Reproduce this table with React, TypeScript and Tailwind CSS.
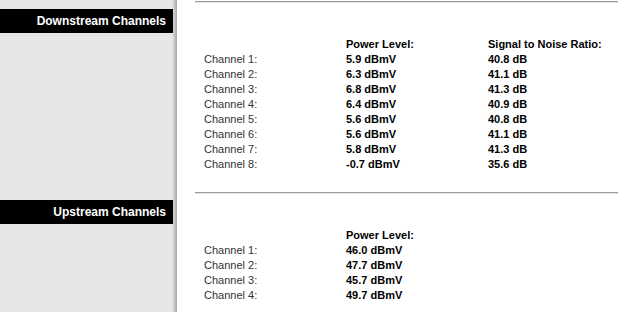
import React from "react";

type Row = { label: string; power: string; snr?: string };

const downstream: Row[] = [
  { label: "Channel 1:", power: "5.9 dBmV", snr: "40.8 dB" },
  { label: "Channel 2:", power: "6.3 dBmV", snr: "41.1 dB" },
  { label: "Channel 3:", power: "6.8 dBmV", snr: "41.3 dB" },
  { label: "Channel 4:", power: "6.4 dBmV", snr: "40.9 dB" },
  { label: "Channel 5:", power: "5.6 dBmV", snr: "40.8 dB" },
  { label: "Channel 6:", power: "5.6 dBmV", snr: "41.1 dB" },
  { label: "Channel 7:", power: "5.8 dBmV", snr: "41.3 dB" },
  { label: "Channel 8:", power: "-0.7 dBmV", snr: "35.6 dB" },
];

const upstream: Row[] = [
  { label: "Channel 1:", power: "46.0 dBmV" },
  { label: "Channel 2:", power: "47.7 dBmV" },
  { label: "Channel 3:", power: "45.7 dBmV" },
  { label: "Channel 4:", power: "49.7 dBmV" },
];

const Section: React.FC<{
  title: string;
  rows: Row[];
  showSnr?: boolean;
  className?: string;
}> = ({ title, rows, showSnr, className }) => (
  <div className={`flex ${className ?? ""}`}>
    {/* sidebar */}
    <div className="flex w-[177px] shrink-0 bg-[#e6e6e6]">
      <div className="w-[173px] pt-[9px]">
        <div className="flex h-[24px] items-center justify-end bg-black pr-[7px] text-[12px] font-bold text-white">
          {title}
        </div>
      </div>
      <div className="w-[4px] bg-gradient-to-r from-[#d6d6d6] to-[#a9a9a9]" />
    </div>

    {/* content */}
    <div className="flex-1 bg-white pl-[18px] pt-[1px]">
      <div className="h-[2px] border-t border-b border-t-[#9a9a9a] border-b-[#e4e4e4]" />
      <div className="pl-[9px] pt-[34px] text-[11px] leading-[15px]">
        <div className="grid grid-cols-[142px_142px_1fr]">
          <div />
          <div className="font-bold text-black">Power Level:</div>
          <div className="font-bold text-black">
            {showSnr ? "Signal to Noise Ratio:" : ""}
          </div>
        </div>
        {rows.map((r) => (
          <div key={r.label} className="grid grid-cols-[142px_142px_1fr]">
            <div className="text-[#333]">{r.label}</div>
            <div className="font-bold text-black">{r.power}</div>
            <div className="font-bold text-black">{r.snr ?? ""}</div>
          </div>
        ))}
      </div>
    </div>
  </div>
);

export default function App() {
  return (
    <div
      className="h-[312px] w-[618px] overflow-hidden bg-white"
      style={{ fontFamily: '"Liberation Sans", Arial, sans-serif' }}
    >
      <Section
        title="Downstream Channels"
        rows={downstream}
        showSnr
        className="h-[191px]"
      />
      <Section title="Upstream Channels" rows={upstream} className="h-[121px]" />
    </div>
  );
}
